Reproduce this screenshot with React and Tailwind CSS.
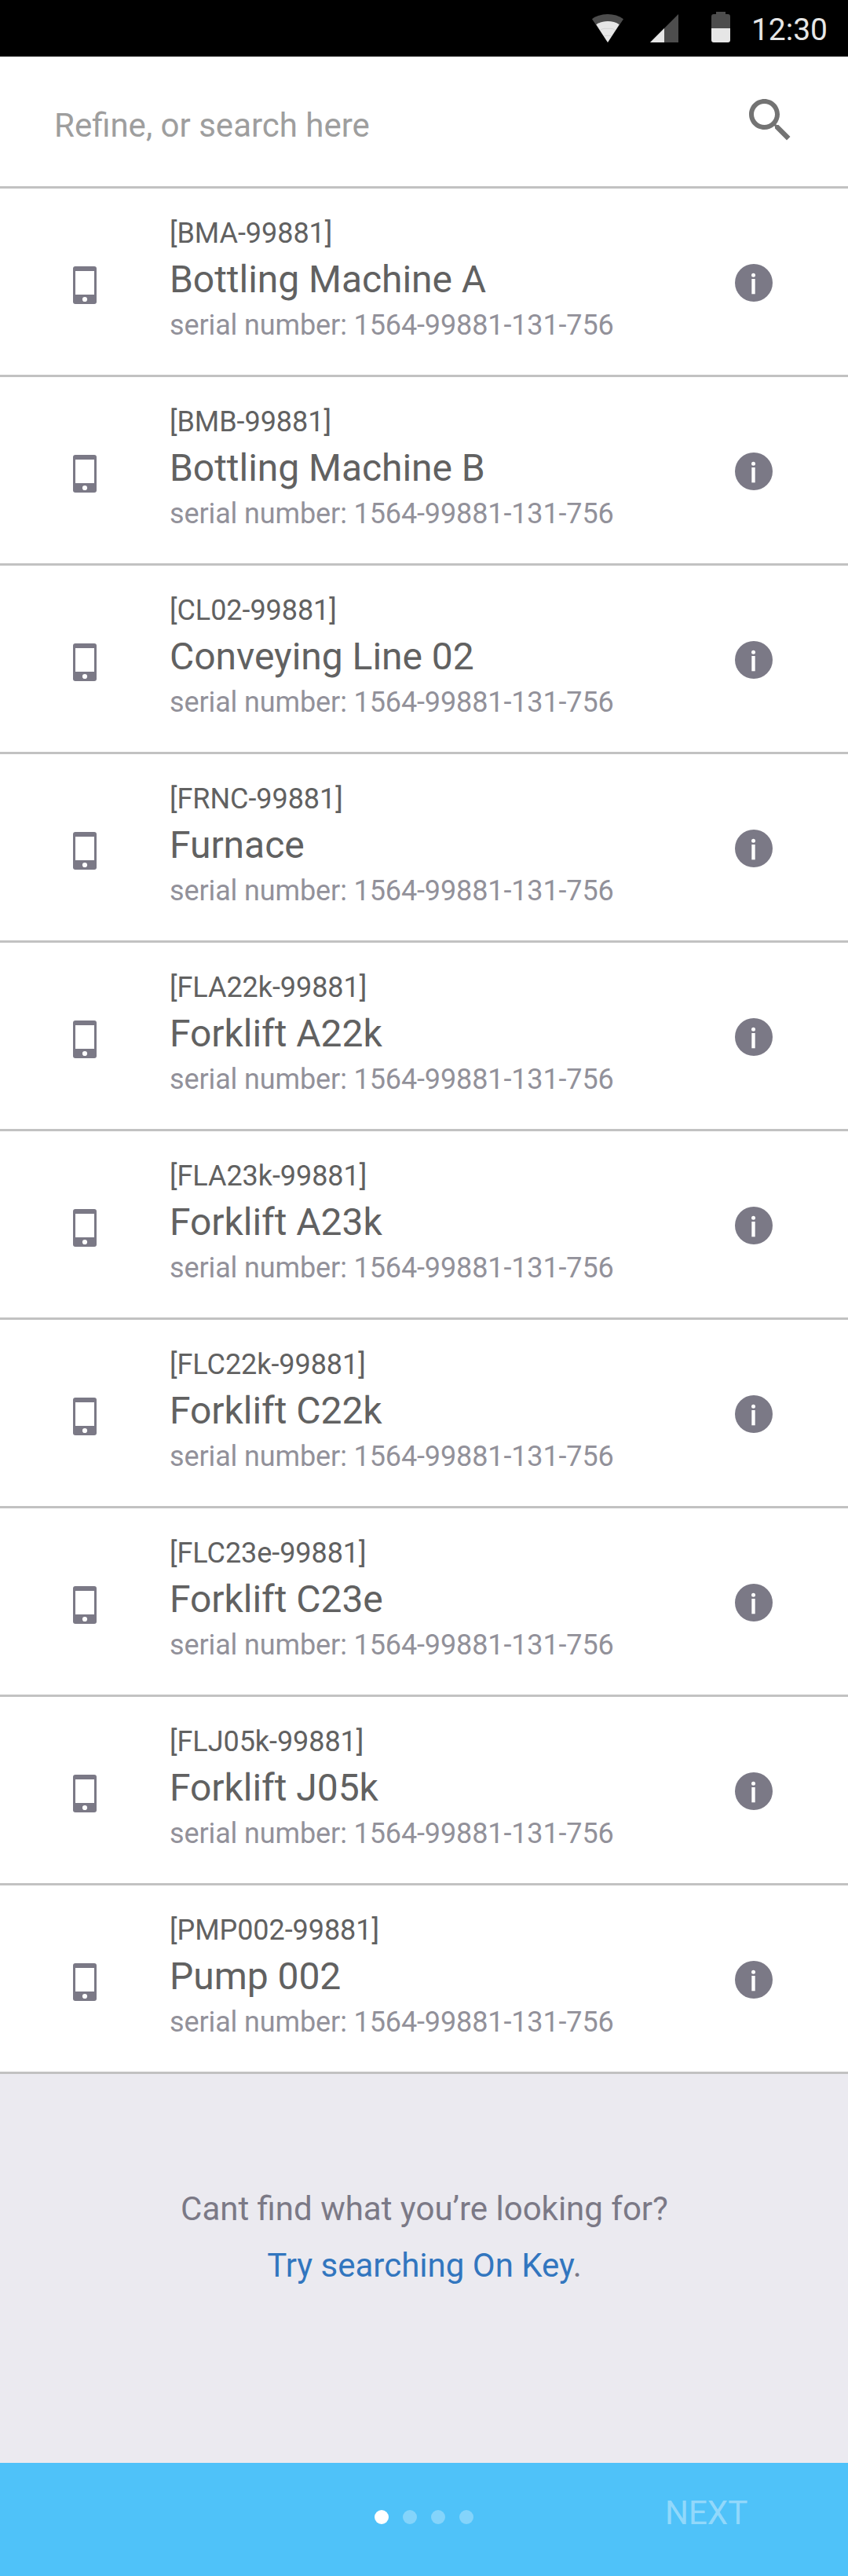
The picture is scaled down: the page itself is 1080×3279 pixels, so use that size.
const ASSETS = [
  { code: "BMA-99881", name: "Bottling Machine A" },
  { code: "BMB-99881", name: "Bottling Machine B" },
  { code: "CL02-99881", name: "Conveying Line 02" },
  { code: "FRNC-99881", name: "Furnace" },
  { code: "FLA22k-99881", name: "Forklift A22k" },
  { code: "FLA23k-99881", name: "Forklift A23k" },
  { code: "FLC22k-99881", name: "Forklift C22k" },
  { code: "FLC23e-99881", name: "Forklift C23e" },
  { code: "FLJ05k-99881", name: "Forklift J05k" },
  { code: "PMP002-99881", name: "Pump 002" },
];

function WifiIcon() {
  return (
    <svg className="mt-[18px] h-9 w-10 shrink-0" viewBox="0 0 40 36">
      <path d="M0 6.2C5.6 2.1 12.6 0 20 0s14.400 2.100 20 6.200L20 36Z" fill="#4d4d4d" />
      <path d="M5.300 13.200C9.500 10.400 14.600 9 20 9s10.500 1.400 14.700 4.200L20 36Z" fill="#e6e6e6" />
      <path d="M10.500 20.400Q13 18.400 16 18.300h8q3 .1 5.500 2.100M15 28.300q1.500-1 3-1h4q1.500 0 3 1" fill="none" stroke="#c4c4c4" strokeWidth="0.6" />
    </svg>
  );
}

function SignalIcon() {
  return (
    <svg className="mt-[18px] ml-[34px] h-9 w-9 shrink-0" viewBox="0 0 36 36">
      <path d="M0 36 36 0v36Z" fill="#4d4d4d" />
      <path d="M0 36 18 18v18Z" fill="#e6e6e6" />
    </svg>
  );
}

function BatteryIcon() {
  return (
    <svg className="mt-[15px] ml-[42px] h-[39px] w-6 shrink-0" viewBox="0 0 24 39">
      <path d="M6 0h12v3h3a3 3 0 0 1 3 3v15H0V6a3 3 0 0 1 3-3h3Z" fill="#4d4d4d" />
      <path d="M0 21h24v15a3 3 0 0 1-3 3H3a3 3 0 0 1-3-3Z" fill="#e6e6e6" />
    </svg>
  );
}

function SearchIcon() {
  return (
    <svg className="h-[72px] w-[72px]" viewBox="0 0 24 24" fill="#737373">
      <path d="M15.500 14h-.79l-.28-.27C15.410 12.590 16 11.110 16 9.500 16 5.910 13.090 3 9.500 3S3 5.910 3 9.500 5.910 16 9.500 16c1.610 0 3.090-.59 4.230-1.570l.27.28v.79l5 4.990L20.490 19l-4.990-5zm-6 0C7.010 14 5 11.990 5 9.500S7.010 5 9.500 5 14 7.010 14 9.500 11.990 14 9.500 14z" />
    </svg>
  );
}

function PhoneIcon() {
  return (
    <svg className="mt-[99px] h-12 w-[30px] shrink-0" viewBox="0 0 30 48">
      <rect width="30" height="48" rx="3" fill="#7b7986" />
      <path d="M3 6h24v30H3Z" fill="#fff" />
      <circle cx="15" cy="42" r="3.100" fill="#fff" />
    </svg>
  );
}

function InfoIcon() {
  return (
    <svg className="h-12 w-12" viewBox="0 0 48 48">
      <circle cx="24" cy="24" r="24" fill="#7b7986" />
      <circle cx="23.500" cy="14.300" r="2.500" fill="#fff" />
      <path d="M21.300 19h4.400v19.300h-4.400Z" fill="#fff" />
    </svg>
  );
}

function AssetRow({ code, name }) {
  return (
    <li className="flex h-60 items-start border-b-[3px] border-[#c2c2c2] bg-white pr-24 pl-[93px]">
      <PhoneIcon />
      <div className="ml-[93px] flex-1 pt-[29px] whitespace-nowrap">
        <p className="text-[36px] leading-[56px] tracking-[-0.06px] text-[#616161]">[{code}]</p>
        <p className="text-5xl leading-[62px] tracking-[-0.04px] text-[#616161]">{name}</p>
        <p className="text-[36px] leading-[54px] tracking-[-0.12px] text-[#92919a]">serial number: 1564-99881-131-756</p>
      </div>
      <button className="mt-24" aria-label={`Details for ${name}`}>
        <InfoIcon />
      </button>
    </li>
  );
}

export default function App() {
  return (
    <div className="flex h-[3279px] w-[1080px] flex-col bg-[#ebeaf0] font-['Roboto',sans-serif]">
      <header className="flex h-[72px] items-start justify-end bg-black pr-[26px]">
        <WifiIcon />
        <SignalIcon />
        <BatteryIcon />
        <span className="ml-[27px] text-[39px] leading-[76px] text-[#e6e6e6]">12:30</span>
      </header>

      <div className="flex h-[168px] items-start justify-between border-b-[3px] border-[#c2c2c2] bg-white pr-[63px] pl-[69px]">
        <span className="pt-14 text-[42px] leading-[64px] text-[#9e9e9e]">Refine, or search here</span>
        <button className="mt-[45px]" aria-label="Search">
          <SearchIcon />
        </button>
      </div>

      <ul>
        {ASSETS.map((asset) => (
          <AssetRow key={asset.code} {...asset} />
        ))}
      </ul>

      <div className="flex-1 pt-[136px] pl-px text-center text-[42px] leading-[72px] text-[#7b7986]">
        <p>Cant find what you’re looking for?</p>
        <p>
          <a className="text-[#3276bf]">Try searching On Key</a>.
        </p>
      </div>

      <footer className="flex h-36 items-start bg-[#4fc2f9]">
        <div className="mt-[60px] ml-[477px] flex gap-[18px]">
          <span className="size-[18px] rounded-full bg-white" />
          <span className="size-[18px] rounded-full bg-white/30" />
          <span className="size-[18px] rounded-full bg-white/30" />
          <span className="size-[18px] rounded-full bg-white/30" />
        </div>
        <span className="mt-[32px] ml-[244px] text-[42px] leading-[64px] text-white/40">NEXT</span>
      </footer>
    </div>
  );
}
